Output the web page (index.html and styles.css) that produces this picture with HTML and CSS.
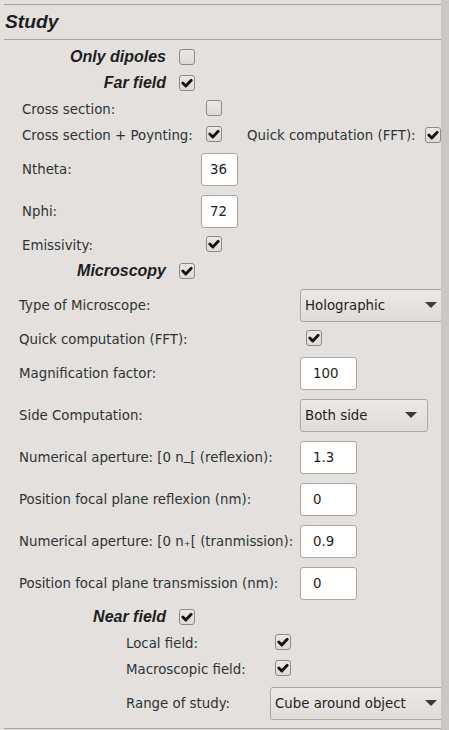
FILE: index.html
```html
<!DOCTYPE html>
<html>
<head>
<meta charset="utf-8">
<link rel="stylesheet" href="styles.css">
</head>
<body>
<div class="window">
  <div class="panel">
    <div class="rule rule-top"></div>
    <div class="title">Study</div>
    <div class="rule"></div>

    <div class="rows">
      <div class="row cbrow hrow">
        <span class="hlabel">Only dipoles</span>
        <span class="cb"></span>
      </div>
      <div class="row cbrow hrow">
        <span class="hlabel">Far field</span>
        <span class="cb on"><svg viewBox="0 0 16 16"><path d="M3.8 8 L6.8 11 L12.2 5.2"/></svg></span>
      </div>

      <div class="row cbrow far">
        <span class="lbl">Cross section:</span>
        <span class="ctl"><span class="cb"></span></span>
      </div>
      <div class="row cbrow far">
        <span class="lbl">Cross section + Poynting:</span>
        <span class="ctl"><span class="cb on"><svg viewBox="0 0 16 16"><path d="M3.8 8 L6.8 11 L12.2 5.2"/></svg></span></span>
        <span class="lbl2">Quick computation (FFT):</span>
        <span class="cb on"><svg viewBox="0 0 16 16"><path d="M3.8 8 L6.8 11 L12.2 5.2"/></svg></span>
      </div>
      <div class="row entrow far">
        <span class="lbl">Ntheta:</span>
        <span class="entry small">36</span>
      </div>
      <div class="row entrow far">
        <span class="lbl">Nphi:</span>
        <span class="entry small">72</span>
      </div>
      <div class="row cbrow far">
        <span class="lbl">Emissivity:</span>
        <span class="ctl"><span class="cb on"><svg viewBox="0 0 16 16"><path d="M3.8 8 L6.8 11 L12.2 5.2"/></svg></span></span>
      </div>

      <div class="row cbrow hrow">
        <span class="hlabel">Microscopy</span>
        <span class="cb on"><svg viewBox="0 0 16 16"><path d="M3.8 8 L6.8 11 L12.2 5.2"/></svg></span>
      </div>

      <div class="row entrow mic">
        <span class="lbl">Type of Microscope:</span>
        <span class="combo wide"><span class="ctext">Holographic</span><span class="arrow"></span></span>
      </div>
      <div class="row cbrow mic">
        <span class="lbl">Quick computation (FFT):</span>
        <span class="ctl"><span class="cb on"><svg viewBox="0 0 16 16"><path d="M3.8 8 L6.8 11 L12.2 5.2"/></svg></span></span>
      </div>
      <div class="row entrow mic">
        <span class="lbl">Magnification factor:</span>
        <span class="entry mid">100</span>
      </div>
      <div class="row entrow mic">
        <span class="lbl">Side Computation:</span>
        <span class="combo side"><span class="ctext">Both side</span><span class="arrow"></span></span>
      </div>
      <div class="row entrow mic">
        <span class="lbl">Numerical aperture: [0 n<span class="subm">_</span>[ (reflexion):</span>
        <span class="entry mid">1.3</span>
      </div>
      <div class="row entrow mic">
        <span class="lbl">Position focal plane reflexion (nm):</span>
        <span class="entry mid">0</span>
      </div>
      <div class="row entrow mic">
        <span class="lbl">Numerical aperture: [0 n<span class="subp">₊</span>[ (tranmission):</span>
        <span class="entry mid">0.9</span>
      </div>
      <div class="row entrow mic">
        <span class="lbl">Position focal plane transmission (nm):</span>
        <span class="entry mid">0</span>
      </div>

      <div class="row cbrow hrow">
        <span class="hlabel">Near field</span>
        <span class="cb on"><svg viewBox="0 0 16 16"><path d="M3.8 8 L6.8 11 L12.2 5.2"/></svg></span>
      </div>
      <div class="row cbrow near">
        <span class="lbl">Local field:</span>
        <span class="ctl"><span class="cb on"><svg viewBox="0 0 16 16"><path d="M3.8 8 L6.8 11 L12.2 5.2"/></svg></span></span>
      </div>
      <div class="row cbrow near">
        <span class="lbl">Macroscopic field:</span>
        <span class="ctl"><span class="cb on"><svg viewBox="0 0 16 16"><path d="M3.8 8 L6.8 11 L12.2 5.2"/></svg></span></span>
      </div>
      <div class="row entrow near">
        <span class="lbl">Range of study:</span>
        <span class="combo range"><span class="ctext">Cube around object</span><span class="arrow"></span></span>
      </div>
    </div>

    <div class="rule rule-bottom"></div>
  </div>
  <div class="scrollstrip"></div>
</div>
</body>
</html>
```

FILE: styles.css
```css
html, body {
  margin: 0;
  padding: 0;
  background: #e3e0dd;
}

body {
  font-family: "DejaVu Sans", sans-serif;
  font-size: 13.33px;
  color: #2e3436;
}

.window {
  display: flex;
  width: 449px;
  height: 730px;
  overflow: hidden;
}

.panel {
  width: 441px;
  flex: none;
  overflow: hidden;
  display: flex;
  flex-direction: column;
}

.scrollstrip {
  flex: 1;
  background: #cbc7c4;
}

.rule {
  height: 1px;
  margin-left: 4px;
  background: #a8a4a0;
  flex: none;
}

.rule-top {
  margin-top: 4px;
}

.rule-bottom {
  margin-top: 4px;
}

.title {
  height: 34px;
  display: flex;
  align-items: center;
  padding-left: 5px;
  font-family: "Liberation Sans", Arial, sans-serif;
  font-weight: bold;
  font-style: italic;
  font-size: 19.2px;
  color: #1e1e1e;
}

.rows {
  display: flex;
  flex-direction: column;
  padding-top: 4px;
}

.row {
  display: flex;
  align-items: center;
  white-space: nowrap;
  flex: none;
}

.cbrow {
  height: 26px;
}

.entrow {
  height: 42px;
}

.hlabel {
  width: 166px;
  text-align: right;
  margin-right: 13px;
  font-family: "Liberation Sans", Arial, sans-serif;
  font-weight: bold;
  font-style: italic;
  font-size: 16px;
  color: #1e1e1e;
}

.lbl {
  flex: none;
}

.far {
  padding-left: 22px;
}
.far .lbl {
  width: 179px;
}
.far .ctl {
  padding-left: 5px;
}
.lbl2 {
  margin-left: 25px;
  width: 184px;
}

.mic {
  padding-left: 19px;
}
.mic .lbl {
  width: 281px;
}
.mic .ctl {
  padding-left: 6px;
}

.near {
  padding-left: 126px;
}
.near .lbl {
  width: 144px;
}
.near .ctl {
  padding-left: 5px;
}

.subm {
  display: inline-block;
  transform: translateY(-2px);
}

.subp {
  font-size: 1em;
}

.cb {
  width: 16px;
  height: 16px;
  box-sizing: border-box;
  border: 1px solid #8e8a86;
  border-radius: 3px;
  background: linear-gradient(#ebe8e6, #ddd9d6);
  display: inline-flex;
  align-items: center;
  justify-content: center;
  flex: none;
}

.cb svg {
  width: 16px;
  height: 16px;
  flex: none;
}

.cb path {
  fill: none;
  stroke: #141414;
  stroke-width: 2.9;
  stroke-linecap: round;
  stroke-linejoin: round;
}

.entry {
  height: 33px;
  box-sizing: border-box;
  border: 1px solid #aaa6a2;
  border-radius: 3px;
  background: #ffffff;
  display: flex;
  align-items: center;
  flex: none;
  color: #1e1e1e;
}

.entry.small {
  width: 37px;
  padding-left: 8px;
}

.entry.mid {
  width: 57px;
  padding-left: 12px;
}

.combo {
  height: 33px;
  box-sizing: border-box;
  border: 1px solid #aaa6a2;
  border-radius: 3px;
  background: linear-gradient(#ebe8e5, #e0dcd9);
  display: flex;
  align-items: center;
  flex: none;
  padding-left: 4px;
  padding-right: 10px;
  color: #1e1e1e;
}

.ctext {
  flex: 1;
}

.arrow {
  width: 0;
  height: 0;
  border-left: 6px solid transparent;
  border-right: 6px solid transparent;
  border-top: 6px solid #3a3a3a;
}

.combo.wide {
  width: 148px;
}

.combo.side {
  width: 128px;
}

.combo.range {
  width: 178px;
}
```
